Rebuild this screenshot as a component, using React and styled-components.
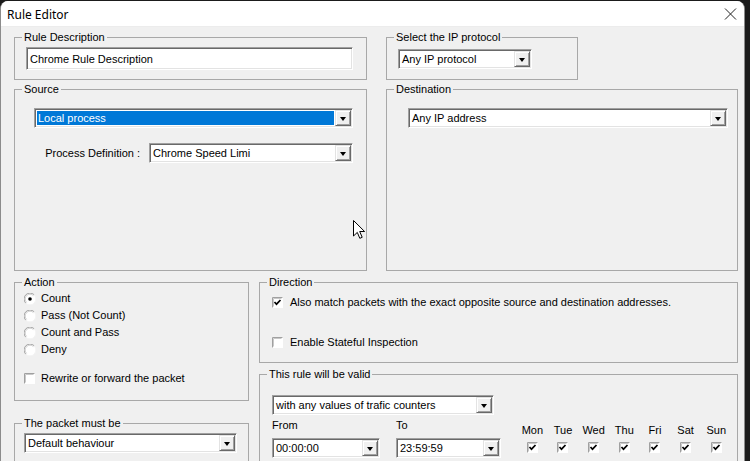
import React from 'react';
import styled, { createGlobalStyle } from 'styled-components';

const Global = createGlobalStyle`
  html, body { margin: 0; padding: 0; background: #1b1b1b; }
  body {
    width: 750px; height: 461px; overflow: hidden;
    font-family: "Liberation Sans", Arial, sans-serif;
  }
`;

const Window = styled.div`
  position: relative;
  box-sizing: border-box;
  width: 745px;
  height: 460px;
  margin-top: 1px;
  background: #f0f0f0;
  border-left: 1px solid #8c8c8c;
  border-right: 1px solid #8c8c8c;
  border-radius: 8px 8px 0 0;
  overflow: hidden;
  font-size: 11px;
  color: #000;
`;

const TitleBar = styled.div`
  height: 26px;
  background: #fff;
  display: flex;
  align-items: center;
  justify-content: space-between;
  padding: 0 7px 0 6px;
  border-bottom: 1px solid #ececec;
  box-sizing: border-box;
`;

const Title = styled.div`
  font-family: "Noto Sans", "Liberation Sans", sans-serif;
  font-size: 12px;
  color: #000;
  padding-top: 1px;
`;

const Body = styled.div`
  display: flex;
  flex-direction: column;
  padding: 4px 0 0 13px;
`;

const TopGrid = styled.div`
  display: grid;
  grid-template-columns: 353px 352px;
  column-gap: 19px;
`;

const BottomGrid = styled.div`
  display: grid;
  grid-template-columns: 235px 479px;
  column-gap: 10px;
  margin-top: 5px;
`;

const Column = styled.div`
  display: flex;
  flex-direction: column;
  gap: ${p => p.$gap}px;
`;

const Group = styled.fieldset`
  box-sizing: border-box;
  margin: 0;
  padding: 0;
  min-width: 0;
  width: ${p => p.$w}px;
  height: ${p => p.$h}px;
  border: 1px solid #a8a8a8;
`;

const Legend = styled.legend`
  margin-left: 7px;
  padding: 0 2px;
  font-size: 11px;
  line-height: 13px;
  color: #000;
`;

const GroupBody = styled.div`
  display: flex;
  flex-direction: column;
  padding: ${p => p.$pad};
`;

const Sunken = styled.div`
  box-sizing: border-box;
  display: flex;
  align-items: stretch;
  width: ${p => p.$w}px;
  height: ${p => p.$h || 20}px;
  background: #fff;
  border-style: solid;
  border-width: 1px;
  border-color: #a0a0a0 #fff #fff #a0a0a0;
  box-shadow: inset 1px 1px 0 #696969, inset -1px -1px 0 #e3e3e3;
  padding: 2px;
`;

const FieldText = styled.div`
  flex: 1;
  display: flex;
  align-items: center;
  padding-left: 1px;
  margin-right: 1px;
  background: ${p => (p.$sel ? '#0078d7' : 'transparent')};
  color: ${p => (p.$sel ? '#fff' : '#000')};
  white-space: nowrap;
  overflow: hidden;
`;

const ArrowButton = styled.div`
  box-sizing: border-box;
  width: 16px;
  margin: -1px -1px -1px 0;
  background: #f0f0f0;
  border-style: solid;
  border-width: 1px;
  border-color: #e3e3e3 #696969 #696969 #e3e3e3;
  box-shadow: inset 1px 1px 0 #fff, inset -1px -1px 0 #a0a0a0;
  display: flex;
  align-items: center;
  justify-content: center;
  &::after {
    content: '';
    width: 0;
    height: 0;
    border-left: 3.5px solid transparent;
    border-right: 3.5px solid transparent;
    border-top: 4px solid #000;
    margin-top: 1px;
  }
`;

const Combo = ({ w, text, sel }) => (
  <Sunken $w={w}>
    <FieldText $sel={sel}>{text}</FieldText>
    <ArrowButton />
  </Sunken>
);

const ProcessRow = styled.div`
  display: flex;
  align-items: center;
  justify-content: flex-end;
  gap: 9px;
  margin-top: 15px;
  width: 319px;
`;

const Label = styled.span`
  font-size: 11px;
  line-height: 13px;
  white-space: nowrap;
`;

const OptionRow = styled.div`
  display: flex;
  align-items: center;
  gap: ${p => p.$gap || 6}px;
  height: 17px;
  margin-top: ${p => p.$mt || 0}px;
  white-space: nowrap;
`;

const TimeRow = styled.div`
  display: flex;
  align-items: flex-start;
  gap: 16px;
  margin-top: 4px;
`;

const TimeCol = styled.div`
  display: flex;
  flex-direction: column;
  gap: 6px;
`;

const Days = styled.div`
  display: grid;
  grid-template-columns: repeat(7, 30.67px);
  margin-top: 5px;
`;

const DayCol = styled.div`
  display: flex;
  flex-direction: column;
  align-items: center;
  gap: 5px;
`;

const CloseIcon = () => (
  <svg width="13" height="12" viewBox="0 0 13 12">
    <path d="M1 0.5 L12 11.5 M12 0.5 L1 11.5" stroke="#222" strokeWidth="1" fill="none" />
  </svg>
);

const Radio = ({ checked }) => (
  <svg width="12" height="12" viewBox="0 0 12 12">
    <circle cx="6" cy="6" r="5.5" fill="#fff" />
    <path d="M10.2 1.8 A5.5 5.5 0 0 0 1.8 10.2" stroke="#a0a0a0" strokeWidth="1" fill="none" />
    <path d="M9.4 2.6 A4.6 4.6 0 0 0 2.6 9.4" stroke="#d0d0d0" strokeWidth="1" fill="none" />
    <path d="M10.2 1.8 A5.5 5.5 0 0 1 1.8 10.2" stroke="#f4f4f4" strokeWidth="1" fill="none" />
    {checked && <circle cx="6" cy="6" r="1.8" fill="#000" />}
  </svg>
);

const Check = ({ checked }) => (
  <svg width="11" height="11" viewBox="0 0 11 11">
    <rect x="0" y="0" width="11" height="11" fill="#fff" />
    <path d="M0.5 10.5 V0.5 H10.5" stroke="#a0a0a0" strokeWidth="1" fill="none" />
    <path d="M1.5 9.5 V1.5 H9.5" stroke="#c8c8c8" strokeWidth="1" fill="none" />
    {checked && (
      <path d="M2.5 5 L4.5 7.2 L8.5 3" stroke="#000" strokeWidth="1.7" fill="none" />
    )}
  </svg>
);

const Cursor = styled.svg`
  position: absolute;
  left: 352px;
  top: 219px;
`;

const days = ['Mon', 'Tue', 'Wed', 'Thu', 'Fri', 'Sat', 'Sun'];

export default function App() {
  return (
    <>
      <Global />
      <Window>
        <TitleBar>
          <Title>Rule Editor</Title>
          <CloseIcon />
        </TitleBar>
        <Body>
          <TopGrid>
            <Column $gap={3}>
              <Group $w={353} $h={49}>
                <Legend>Rule Description</Legend>
                <GroupBody $pad="3px 0 0 11px">
                  <Sunken $w={327} $h={23}>
                    <FieldText>Chrome Rule Description</FieldText>
                  </Sunken>
                </GroupBody>
              </Group>
              <Group $w={353} $h={188}>
                <Legend>Source</Legend>
                <GroupBody $pad="12px 0 0 19px">
                  <Combo w={319} text="Local process" sel />
                  <ProcessRow>
                    <Label>Process Definition :</Label>
                    <Combo w={204} text="Chrome Speed Limi" />
                  </ProcessRow>
                </GroupBody>
              </Group>
            </Column>
            <Column $gap={3}>
              <Group $w={192} $h={49}>
                <Legend>Select the IP protocol</Legend>
                <GroupBody $pad="5px 0 0 11px">
                  <Combo w={134} text="Any IP protocol" />
                </GroupBody>
              </Group>
              <Group $w={352} $h={188}>
                <Legend>Destination</Legend>
                <GroupBody $pad="12px 0 0 21px">
                  <Combo w={320} text="Any IP address" />
                </GroupBody>
              </Group>
            </Column>
          </TopGrid>
          <BottomGrid>
            <Column $gap={16}>
              <Group $w={235} $h={125}>
                <Legend>Action</Legend>
                <GroupBody $pad="1px 0 0 9px">
                  <OptionRow $gap={5}><Radio checked /><Label>Count</Label></OptionRow>
                  <OptionRow $gap={5}><Radio /><Label>Pass (Not Count)</Label></OptionRow>
                  <OptionRow $gap={5}><Radio /><Label>Count and Pass</Label></OptionRow>
                  <OptionRow $gap={5}><Radio /><Label>Deny</Label></OptionRow>
                  <OptionRow $gap={6} $mt={12}><Check /><Label>Rewrite or forward the packet</Label></OptionRow>
                </GroupBody>
              </Group>
              <Group $w={235} $h={70}>
                <Legend>The packet must be</Legend>
                <GroupBody $pad="3px 0 0 9px">
                  <Combo w={213} text="Default behaviour" />
                </GroupBody>
              </Group>
            </Column>
            <Column $gap={5}>
              <Group $w={479} $h={87}>
                <Legend>Direction</Legend>
                <GroupBody $pad="5px 0 0 12px">
                  <OptionRow $gap={7}><Check checked /><Label>Also match packets with the exact opposite source and destination addresses.</Label></OptionRow>
                  <OptionRow $gap={7} $mt={23}><Check /><Label>Enable Stateful Inspection</Label></OptionRow>
                </GroupBody>
              </Group>
              <Group $w={479} $h={110}>
                <Legend>This rule will be valid</Legend>
                <GroupBody $pad="14px 0 0 12px">
                  <Combo w={222} text="with any values of trafic counters" />
                  <TimeRow>
                    <TimeCol>
                      <Label>From</Label>
                      <Combo w={108} text="00:00:00" />
                    </TimeCol>
                    <TimeCol>
                      <Label>To</Label>
                      <Combo w={105} text="23:59:59" />
                    </TimeCol>
                    <Days>
                      {days.map(d => (
                        <DayCol key={d}>
                          <Label>{d}</Label>
                          <Check checked />
                        </DayCol>
                      ))}
                    </Days>
                  </TimeRow>
                </GroupBody>
              </Group>
            </Column>
          </BottomGrid>
        </Body>
        <Cursor width="13" height="20" viewBox="0 0 13 20">
          <path d="M0.5 0.5 V16 L4.3 12.4 L6.8 18.3 L9.2 17.3 L6.7 11.5 H11.6 Z" fill="#fff" stroke="#000" strokeWidth="1" strokeLinejoin="round" />
        </Cursor>
      </Window>
    </>
  );
}
